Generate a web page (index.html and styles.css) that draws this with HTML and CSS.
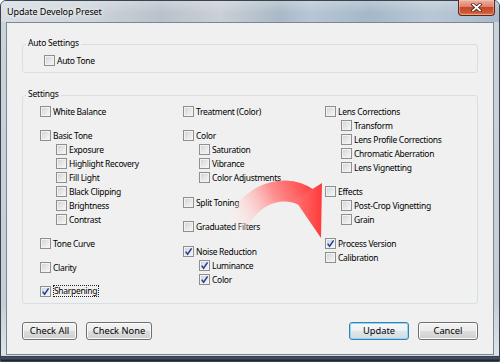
FILE: index.html
```html
<!DOCTYPE html>
<html>
<head>
<meta charset="utf-8">
<link rel="stylesheet" href="styles.css">
</head>
<body>
<div class="window">
  <div class="titlebar">
    <span class="title">Update Develop Preset</span>
    <span class="close">
      <svg width="11" height="9" viewBox="0 0 11 9">
        <path d="M2 1.5 L9 7.5 M9 1.5 L2 7.5" stroke="#4a1d14" stroke-width="3.4" stroke-linecap="square" fill="none"/>
        <path d="M2 1.5 L9 7.5 M9 1.5 L2 7.5" stroke="#ffffff" stroke-width="1.8" stroke-linecap="square" fill="none"/>
      </svg>
    </span>
  </div>
  <div class="client">
    <fieldset class="group">
      <legend>Auto Settings</legend>
      <div class="auto-body">
        <label class="cb"><span class="box"></span><span class="txt">Auto Tone</span></label>
      </div>
    </fieldset>

    <fieldset class="group group-settings">
      <legend>Settings</legend>
      <div class="cols">
        <div class="col">
          <div class="grp">
            <label class="cb"><span class="box"></span><span class="txt">White Balance</span></label>
          </div>
          <div class="grp">
            <label class="cb"><span class="box"></span><span class="txt">Basic Tone</span></label>
            <label class="cb sub"><span class="box"></span><span class="txt">Exposure</span></label>
            <label class="cb sub"><span class="box"></span><span class="txt">Highlight Recovery</span></label>
            <label class="cb sub"><span class="box"></span><span class="txt">Fill Light</span></label>
            <label class="cb sub"><span class="box"></span><span class="txt">Black Clipping</span></label>
            <label class="cb sub"><span class="box"></span><span class="txt">Brightness</span></label>
            <label class="cb sub"><span class="box"></span><span class="txt">Contrast</span></label>
          </div>
          <div class="grp">
            <label class="cb"><span class="box"></span><span class="txt">Tone Curve</span></label>
          </div>
          <div class="grp">
            <label class="cb"><span class="box"></span><span class="txt">Clarity</span></label>
          </div>
          <div class="grp">
            <label class="cb"><span class="box on"><svg viewBox="0 0 9 9" width="9" height="9"><path d="M1.6 4.6 L3.6 7.2 L7.6 1.4" fill="none" stroke="#1f3f96" stroke-width="1.5"/></svg></span><span class="txt focus">Sharpening</span></label>
          </div>
        </div>

        <div class="col col-mid">
          <div class="grp">
            <label class="cb"><span class="box"></span><span class="txt">Treatment (Color)</span></label>
          </div>
          <div class="grp">
            <label class="cb"><span class="box"></span><span class="txt">Color</span></label>
            <label class="cb sub"><span class="box"></span><span class="txt">Saturation</span></label>
            <label class="cb sub"><span class="box"></span><span class="txt">Vibrance</span></label>
            <label class="cb sub"><span class="box"></span><span class="txt">Color Adjustments</span></label>
          </div>
          <div class="grp">
            <label class="cb"><span class="box"></span><span class="txt">Split Toning</span></label>
          </div>
          <div class="grp">
            <label class="cb"><span class="box"></span><span class="txt">Graduated Filters</span></label>
          </div>
          <div class="grp">
            <label class="cb"><span class="box on"><svg viewBox="0 0 9 9" width="9" height="9"><path d="M1.6 4.6 L3.6 7.2 L7.6 1.4" fill="none" stroke="#1f3f96" stroke-width="1.5"/></svg></span><span class="txt">Noise Reduction</span></label>
            <label class="cb sub"><span class="box on"><svg viewBox="0 0 9 9" width="9" height="9"><path d="M1.6 4.6 L3.6 7.2 L7.6 1.4" fill="none" stroke="#1f3f96" stroke-width="1.5"/></svg></span><span class="txt">Luminance</span></label>
            <label class="cb sub"><span class="box on"><svg viewBox="0 0 9 9" width="9" height="9"><path d="M1.6 4.6 L3.6 7.2 L7.6 1.4" fill="none" stroke="#1f3f96" stroke-width="1.5"/></svg></span><span class="txt">Color</span></label>
          </div>
        </div>

        <div class="col">
          <div class="grp">
            <label class="cb"><span class="box"></span><span class="txt">Lens Corrections</span></label>
            <label class="cb sub"><span class="box"></span><span class="txt">Transform</span></label>
            <label class="cb sub"><span class="box"></span><span class="txt">Lens Profile Corrections</span></label>
            <label class="cb sub"><span class="box"></span><span class="txt">Chromatic Aberration</span></label>
            <label class="cb sub"><span class="box"></span><span class="txt">Lens Vignetting</span></label>
          </div>
          <div class="grp">
            <label class="cb"><span class="box"></span><span class="txt">Effects</span></label>
            <label class="cb sub"><span class="box"></span><span class="txt">Post-Crop Vignetting</span></label>
            <label class="cb sub"><span class="box"></span><span class="txt">Grain</span></label>
          </div>
          <div class="grp">
            <label class="cb"><span class="box on"><svg viewBox="0 0 9 9" width="9" height="9"><path d="M1.6 4.6 L3.6 7.2 L7.6 1.4" fill="none" stroke="#1f3f96" stroke-width="1.5"/></svg></span><span class="txt">Process Version</span></label>
            <label class="cb"><span class="box"></span><span class="txt">Calibration</span></label>
          </div>
        </div>
      </div>
    </fieldset>

    <div class="buttons">
      <div class="btn-group">
        <button class="btn btn-all">Check All</button>
        <button class="btn btn-none">Check None</button>
      </div>
      <div class="btn-group">
        <button class="btn btn-default btn-ok">Update</button>
        <button class="btn btn-ok">Cancel</button>
      </div>
    </div>
  </div>

  <svg class="arrow" width="500" height="362" viewBox="0 0 500 362">
    <defs>
      <linearGradient id="bandGrad" gradientUnits="userSpaceOnUse" x1="232" y1="236" x2="312" y2="194">
        <stop offset="0" stop-color="#ffffff" stop-opacity="0"/>
        <stop offset="0.28" stop-color="#ffd2d2" stop-opacity="0.55"/>
        <stop offset="0.62" stop-color="#ff9090"/>
        <stop offset="1" stop-color="#ff4848"/>
      </linearGradient>
      <linearGradient id="headGrad" gradientUnits="userSpaceOnUse" x1="295" y1="210" x2="322" y2="210">
        <stop offset="0" stop-color="#ff7373"/>
        <stop offset="1" stop-color="#ff3a3a"/>
      </linearGradient>
    </defs>
    <path d="M232 245 C 236 200, 280 178, 309 199" fill="none" stroke="url(#bandGrad)" stroke-width="21"/>
    <polygon points="295,200 322,183 321,238" fill="url(#headGrad)"/>
  </svg>
</div>
</body>
</html>
```

FILE: styles.css
```css
* {
  box-sizing: border-box;
}

html, body {
  margin: 0;
  padding: 0;
}

body {
  width: 500px;
  height: 362px;
  overflow: hidden;
  background: #ffffff;
  font-family: "Noto Sans", "Open Sans", "DejaVu Sans", sans-serif;
  color: #000;
}

.window {
  position: relative;
  width: 500px;
  height: 362px;
  border: 1px solid #3a444f;
  border-radius: 6px 6px 0 0;
  display: flex;
  flex-direction: column;
  padding-bottom: 6px;
  background:
    linear-gradient(to bottom,
      #cbd3db 0px,
      #c5ced7 300px,
      #dde3e9 353px,
      #d0d7de 355px,
      #2c3646 355px,
      #4a5567 357px,
      #161d28 360px);
}

.titlebar {
  flex: none;
  height: 21px;
  display: flex;
  align-items: flex-start;
  border-radius: 5px 5px 0 0;
  background:
    linear-gradient(to bottom, rgba(255,255,255,0.25), rgba(255,255,255,0) 60%),
    linear-gradient(to right,
      #d7dde3 0%,
      #cdd4da 18%,
      #b9c2cb 32%,
      #c9d0d6 44%,
      #aab9c7 56%,
      #b7c6d4 62%,
      #a5b7c8 74%,
      #b9c8d5 86%,
      #a8bacb 100%);
}

.title {
  flex: 1;
  padding-left: 6px;
  line-height: 21px;
  font-size: 9px;
  letter-spacing: -0.1px;
  color: #000;
  text-shadow: 0 0 4px #ffffff, 0 0 7px rgba(255,255,255,0.8);
  white-space: nowrap;
}

.close {
  flex: none;
  width: 37px;
  height: 16px;
  margin: -1px 4px 0 0;
  display: flex;
  align-items: center;
  justify-content: center;
  border: 1px solid #5f241a;
  border-top: none;
  border-radius: 0 0 4px 4px;
  background: linear-gradient(to bottom, #eab1a2 0%, #dc826c 45%, #c8462b 50%, #cf5a36 85%, #e0835f 100%);
  box-shadow: inset 0 0 0 1px rgba(255,210,190,0.45);
}

.client {
  flex: 1;
  margin: 0 5px;
  border: 1px solid #7b8794;
  background: #f0f0f0;
  padding: 14px 15px 0 15px;
  display: flex;
  flex-direction: column;
}

.group {
  margin: 0;
  padding: 0;
  min-width: 0;
  border: 1px solid #d5dfe5;
  border-radius: 3px;
}

.group legend {
  margin-left: 3px;
  padding: 0 2px 3px 2px;
  font-size: 8.5px;
  line-height: 12px;
  letter-spacing: -0.2px;
  color: #000;
}

.auto-body {
  padding: 1px 0 5px 21px;
}

.group-settings {
  margin-top: 15px;
}

.cols {
  display: grid;
  grid-template-columns: 143px 142px 1fr;
  align-items: start;
  padding: 1px 0 5px 17px;
}

.col {
  display: flex;
  flex-direction: column;
  gap: 10px;
}

.col-mid {
  gap: 10.5px;
}

.grp {
  display: flex;
  flex-direction: column;
}

.cb {
  display: flex;
  align-items: center;
  height: 14px;
  gap: 2px;
  font-size: 8.5px;
  letter-spacing: -0.3px;
  white-space: nowrap;
  color: #000;
}

.cb.sub {
  padding-left: 16px;
}

.box {
  flex: none;
  width: 11px;
  height: 11px;
  border: 1px solid #8d8f91;
  background: linear-gradient(135deg, #cdd0d4 0%, #e4e6e8 50%, #f7f7f7 100%);
  box-shadow: inset 0 0 0 1px #f2f2f2;
  display: flex;
  align-items: center;
  justify-content: center;
}

.box svg {
  display: block;
}

.focus {
  border: 1px dotted #222;
  line-height: 10px;
  padding: 0 1px 0 0;
}

.buttons {
  margin-top: 18px;
  display: flex;
  justify-content: space-between;
}

.btn-group {
  display: flex;
  gap: 9px;
}

.btn {
  height: 18px;
  padding: 0 0 1px 0;
  border: 1px solid #707070;
  border-radius: 3px;
  background: linear-gradient(to bottom, #f3f3f3 0%, #ebebeb 48%, #dddddd 52%, #cfcfcf 100%);
  box-shadow: inset 0 0 0 1px #fbfbfb;
  font-family: "Noto Sans", "Open Sans", sans-serif;
  font-size: 9.3px;
  color: #000;
  line-height: 15px;
  text-align: center;
}

.btn-all { width: 55px; }
.btn-none { width: 66px; }
.btn-ok { width: 60px; }

.btn-default {
  border-color: #3c7fb1;
  background: linear-gradient(to bottom, #f5f9fb 0%, #ecf1f4 48%, #dfe6ea 52%, #d3dbe0 100%);
  box-shadow: inset 0 0 0 1px #8fd6f5;
}

.arrow {
  position: absolute;
  left: -1px;
  top: -1px;
  pointer-events: none;
}
```
